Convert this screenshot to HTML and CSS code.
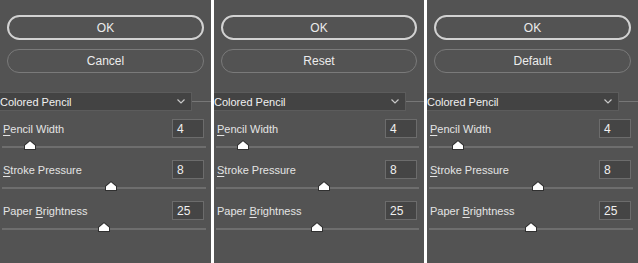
FILE: index.html
```html
<!DOCTYPE html>
<html lang="en">

<head>
    <meta charset="UTF-8">
    <title>Colored Pencil</title>
    <link rel="stylesheet" href="styles.css">
</head>

<body>
    <div class="strip">
        <div class="panel">
            <div class="btn primary">OK</div>
            <div class="btn">Cancel</div>
            <div class="select-row">
                <div class="select">
                    <span>Colored Pencil</span>
                    <svg class="chevron" width="8" height="5" viewBox="0 0 8 5"><path d="M0.5 0.5 L4 4 L7.5 0.5" fill="none" stroke="#c8c8c8" stroke-width="1.2"/></svg>
                </div>
                <div class="select-line"></div>
            </div>
            <div class="field">
                <div class="field-row">
                    <span class="label"><u>P</u>encil Width</span>
                    <div class="num">4</div>
                </div>
                <div class="track"><svg class="thumb" style="left: 22px" width="12" height="10" viewBox="0 0 12 10"><path d="M0 10 V5 L6 0 L12 5 V10 Z" fill="#303030"/><path d="M1 9 V5.4 L6 1.2 L11 5.4 V9 Z" fill="#ffffff"/></svg></div>
            </div>
            <div class="field">
                <div class="field-row">
                    <span class="label"><u>S</u>troke Pressure</span>
                    <div class="num">8</div>
                </div>
                <div class="track"><svg class="thumb" style="left: 103px" width="12" height="10" viewBox="0 0 12 10"><path d="M0 10 V5 L6 0 L12 5 V10 Z" fill="#303030"/><path d="M1 9 V5.4 L6 1.2 L11 5.4 V9 Z" fill="#ffffff"/></svg></div>
            </div>
            <div class="field">
                <div class="field-row">
                    <span class="label">Paper <u>B</u>rightness</span>
                    <div class="num">25</div>
                </div>
                <div class="track"><svg class="thumb" style="left: 96px" width="12" height="10" viewBox="0 0 12 10"><path d="M0 10 V5 L6 0 L12 5 V10 Z" fill="#303030"/><path d="M1 9 V5.4 L6 1.2 L11 5.4 V9 Z" fill="#ffffff"/></svg></div>
            </div>
        </div>

        <div class="sep"></div>

        <div class="panel narrow">
            <div class="btn primary">OK</div>
            <div class="btn">Reset</div>
            <div class="select-row">
                <div class="select">
                    <span>Colored Pencil</span>
                    <svg class="chevron" width="8" height="5" viewBox="0 0 8 5"><path d="M0.5 0.5 L4 4 L7.5 0.5" fill="none" stroke="#c8c8c8" stroke-width="1.2"/></svg>
                </div>
                <div class="select-line"></div>
            </div>
            <div class="field">
                <div class="field-row">
                    <span class="label"><u>P</u>encil Width</span>
                    <div class="num">4</div>
                </div>
                <div class="track"><svg class="thumb" style="left: 21px" width="12" height="10" viewBox="0 0 12 10"><path d="M0 10 V5 L6 0 L12 5 V10 Z" fill="#303030"/><path d="M1 9 V5.4 L6 1.2 L11 5.4 V9 Z" fill="#ffffff"/></svg></div>
            </div>
            <div class="field">
                <div class="field-row">
                    <span class="label"><u>S</u>troke Pressure</span>
                    <div class="num">8</div>
                </div>
                <div class="track"><svg class="thumb" style="left: 102px" width="12" height="10" viewBox="0 0 12 10"><path d="M0 10 V5 L6 0 L12 5 V10 Z" fill="#303030"/><path d="M1 9 V5.4 L6 1.2 L11 5.4 V9 Z" fill="#ffffff"/></svg></div>
            </div>
            <div class="field">
                <div class="field-row">
                    <span class="label">Paper <u>B</u>rightness</span>
                    <div class="num">25</div>
                </div>
                <div class="track"><svg class="thumb" style="left: 95px" width="12" height="10" viewBox="0 0 12 10"><path d="M0 10 V5 L6 0 L12 5 V10 Z" fill="#303030"/><path d="M1 9 V5.4 L6 1.2 L11 5.4 V9 Z" fill="#ffffff"/></svg></div>
            </div>
        </div>

        <div class="sep"></div>

        <div class="panel">
            <div class="btn primary">OK</div>
            <div class="btn">Default</div>
            <div class="select-row">
                <div class="select">
                    <span>Colored Pencil</span>
                    <svg class="chevron" width="8" height="5" viewBox="0 0 8 5"><path d="M0.5 0.5 L4 4 L7.5 0.5" fill="none" stroke="#c8c8c8" stroke-width="1.2"/></svg>
                </div>
                <div class="select-line"></div>
            </div>
            <div class="field">
                <div class="field-row">
                    <span class="label"><u>P</u>encil Width</span>
                    <div class="num">4</div>
                </div>
                <div class="track"><svg class="thumb" style="left: 23px" width="12" height="10" viewBox="0 0 12 10"><path d="M0 10 V5 L6 0 L12 5 V10 Z" fill="#303030"/><path d="M1 9 V5.4 L6 1.2 L11 5.4 V9 Z" fill="#ffffff"/></svg></div>
            </div>
            <div class="field">
                <div class="field-row">
                    <span class="label"><u>S</u>troke Pressure</span>
                    <div class="num">8</div>
                </div>
                <div class="track"><svg class="thumb" style="left: 103px" width="12" height="10" viewBox="0 0 12 10"><path d="M0 10 V5 L6 0 L12 5 V10 Z" fill="#303030"/><path d="M1 9 V5.4 L6 1.2 L11 5.4 V9 Z" fill="#ffffff"/></svg></div>
            </div>
            <div class="field">
                <div class="field-row">
                    <span class="label">Paper <u>B</u>rightness</span>
                    <div class="num">25</div>
                </div>
                <div class="track"><svg class="thumb" style="left: 96px" width="12" height="10" viewBox="0 0 12 10"><path d="M0 10 V5 L6 0 L12 5 V10 Z" fill="#303030"/><path d="M1 9 V5.4 L6 1.2 L11 5.4 V9 Z" fill="#ffffff"/></svg></div>
            </div>
        </div>
    </div>
</body>

</html>
```

FILE: styles.css
```css
body {
    margin: 0;
    background-color: #535353;
    font-family: "Liberation Sans", Arial, sans-serif;
    font-size: 11px;
    color: #e4e4e4;
}

.strip {
    display: flex;
    height: 263px;
}

.panel {
    width: 211px;
    flex-shrink: 0;
    overflow: hidden;
    padding-top: 15px;
    box-sizing: border-box;
}

.panel.narrow {
    width: 210px;
}

.sep {
    width: 3px;
    flex-shrink: 0;
    background-color: #ffffff;
}

/* pill buttons */
.btn {
    margin: 0 7px;
    height: 25px;
    border-radius: 13px;
    border: 1px solid #7a7a7a;
    box-sizing: border-box;
    display: flex;
    justify-content: center;
    align-items: center;
    font-size: 12px;
    color: #ececec;
}

.btn.primary {
    border: 2px solid #d2d2d2;
}

.btn + .btn {
    margin-top: 9px;
    height: 24px;
}

/* filter dropdown */
.select-row {
    display: flex;
    align-items: center;
    margin-top: 19px;
}

.select {
    width: 198px;
    height: 19px;
    margin-left: -6px;
    padding: 0 5px 0 5px;
    box-sizing: border-box;
    background-color: #434343;
    border: 1px solid #5c5c5c;
    display: flex;
    align-items: center;
    justify-content: space-between;
    flex-shrink: 0;
    color: #f0f0f0;
}

.chevron {
    margin-right: 1px;
}

.select-line {
    flex: 1;
    height: 1px;
    background-color: #777;
}

/* slider fields */
.field {
    margin-top: 8px;
}

.field + .field {
    margin-top: 12px;
}

.field-row {
    display: flex;
    align-items: center;
    padding-left: 3px;
    padding-right: 7px;
}

.label {
    flex: 1;
}

.label u {
    text-underline-offset: 2px;
}

.num {
    width: 32px;
    height: 19px;
    box-sizing: border-box;
    border: 1px solid #6c6c6c;
    background-color: #454545;
    padding-left: 4px;
    display: flex;
    align-items: center;
    color: #f0f0f0;
    font-size: 12px;
}

.track {
    position: relative;
    margin: 8px 5px 0 2px;
    height: 2px;
    background-color: #6e6e6e;
}

.thumb {
    position: absolute;
    top: -6px;
}
```
